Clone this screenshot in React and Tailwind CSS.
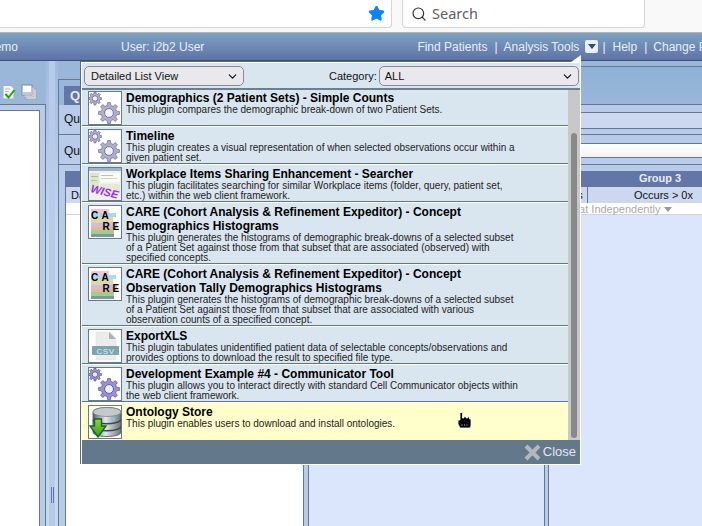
import { Search, Star, ChevronDown } from 'lucide-react';

const gearPoints = (cx, cy, r, teeth) => {
  const pts = [];
  const inner = r * 0.74;
  const step = (Math.PI * 2) / teeth;
  for (let i = 0; i < teeth; i++) {
    const a = i * step - Math.PI / 2;
    [[-0.3, inner], [-0.18, r], [0.18, r], [0.3, inner]].forEach(([o, rad]) => {
      const t = a + o * step;
      pts.push(`${(cx + Math.cos(t) * rad).toFixed(2)},${(cy + Math.sin(t) * rad).toFixed(2)}`);
    });
  }
  return pts.join(' ');
};

function Gear({ cx, cy, r, fill, edge }) {
  return (
    <g>
      <polygon points={gearPoints(cx, cy, r, 8)} fill={fill} stroke={edge} strokeWidth="0.7" />
      <circle cx={cx} cy={cy} r={r * 0.42} fill="#f2f2fa" stroke={edge} strokeWidth="0.9" />
    </g>
  );
}

function GearsIcon({ fill = '#aeaecd', edge = '#6c6c9a' }) {
  return (
    <svg width="32" height="32" viewBox="0 0 32 32">
      <Gear cx={6} cy={6.5} r={6.5} fill={fill} edge={edge} />
      <Gear cx={20} cy={21} r={10.5} fill={fill} edge={edge} />
    </svg>
  );
}

function WiseIcon() {
  return (
    <svg width="32" height="32" viewBox="0 0 32 32">
      <rect width="32" height="32" fill="#eef1ee" />
      <rect width="32" height="3" fill="#9fb4c8" />
      <rect x="1" y="5" width="9" height="18" fill="#dfe6c8" />
      <rect x="11" y="5" width="20" height="9" fill="#fbfbf0" />
      <rect x="12" y="7" width="12" height="1" fill="#b5c0cc" />
      <rect x="12" y="10" width="16" height="1" fill="#c8d0d8" />
      <rect x="2" y="8" width="7" height="1" fill="#a8b8a0" />
      <rect x="2" y="12" width="6" height="1" fill="#b8c4a8" />
      <rect x="11" y="16" width="20" height="8" fill="#e4e8d8" />
      <text x="1" y="24" transform="rotate(14 1 24)" fontFamily="Liberation Sans" fontSize="11" fontWeight="700" fontStyle="italic" fill="#9b30e6">WISE</text>
    </svg>
  );
}

function CareIcon() {
  const bars = [
    ['#f7c3d6', 3, 4, 18],
    ['#a6dcec', 7, 4, 25],
    ['#e3d6a2', 11, 6, 22],
    ['#cbbfe0', 17, 4, 26],
    ['#eeb48e', 21, 3, 25],
    ['#9ccf8c', 24, 4, 23],
    ['#7f98a8', 28, 3, 23],
  ];
  return (
    <svg width="32" height="32" viewBox="0 0 32 32">
      {bars.map(([c, y, h, w]) => (
        <rect key={y} x="2" y={y} width={w} height={h} fill={c} />
      ))}
      <text x="2" y="13" fontFamily="Liberation Sans" fontSize="10" fontWeight="700" fill="#000">C</text>
      <text x="12.5" y="13" fontFamily="Liberation Sans" fontSize="10" fontWeight="700" fill="#000">A</text>
      <text x="13.5" y="24" fontFamily="Liberation Sans" fontSize="10" fontWeight="700" fill="#000">R</text>
      <text x="23.5" y="24" fontFamily="Liberation Sans" fontSize="10" fontWeight="700" fill="#000">E</text>
    </svg>
  );
}

function CsvIcon() {
  return (
    <svg width="32" height="32" viewBox="0 0 32 32">
      <path d="M7 2 H21 L27 8 V30 H7 Z" fill="#ececec" stroke="#dcdcdc" strokeWidth="0.5" />
      <path d="M20 2 L27 9 H20 Z" fill="#b0b0b0" />
      <rect x="3" y="16" width="27" height="9" rx="1" fill="#7ea4ae" />
      <text x="16.5" y="23.5" textAnchor="middle" fontFamily="Liberation Sans" fontSize="8" letterSpacing="0.5" fill="#e8f0f2">CSV</text>
    </svg>
  );
}

function OntologyIcon() {
  return (
    <svg width="32" height="32" viewBox="0 0 32 32">
      <defs>
        <linearGradient id="dbBody" x1="0" x2="1" y1="0" y2="0">
          <stop offset="0" stopColor="#5d6468" />
          <stop offset="0.45" stopColor="#e6e9ea" />
          <stop offset="1" stopColor="#6d7478" />
        </linearGradient>
        <linearGradient id="dbArrow" x1="0" x2="0" y1="0" y2="1">
          <stop offset="0" stopColor="#a4d034" />
          <stop offset="1" stopColor="#2c9c20" />
        </linearGradient>
      </defs>
      <path d="M4 6 C4 0 32 0 32 6 V26 C32 32 4 32 4 26 Z" fill="url(#dbBody)" stroke="#4a5155" strokeWidth="0.8" />
      <ellipse cx="18" cy="6" rx="14" ry="4.5" fill="#c4cacc" stroke="#6a7175" strokeWidth="0.6" />
      <path d="M4 14 C8 19 28 19 32 14 M4 21 C8 26 28 26 32 21" fill="none" stroke="#3e4549" strokeWidth="1.4" />
      <ellipse cx="24" cy="13" rx="2.5" ry="1.8" fill="#7fc4e0" />
      <path d="M5.5 13 H12.5 V20 H17 L9 31 L1 20 H5.5 Z" fill="url(#dbArrow)" stroke="#0b6a2e" strokeWidth="1.4" />
    </svg>
  );
}

const plugins = [
  {
    title: ['Demographics (2 Patient Sets) - Simple Counts'],
    desc: ['This plugin compares the demographic break-down of two Patient Sets.'],
    icon: <GearsIcon />,
  },
  {
    title: ['Timeline'],
    desc: ['This plugin creates a visual representation of when selected observations occur within a', 'given patient set.'],
    icon: <GearsIcon />,
  },
  {
    title: ['Workplace Items Sharing Enhancement - Searcher'],
    desc: ['This plugin facilitates searching for similar Workplace items (folder, query, patient set,', 'etc.) within the web client framework.'],
    icon: <WiseIcon />,
  },
  {
    title: ['CARE (Cohort Analysis & Refinement Expeditor) - Concept', 'Demographics Histograms'],
    desc: [
      'This plugin generates the histograms of demographic break-downs of a selected subset',
      'of a Patient Set against those from that subset that are associated (observed) with',
      'specified concepts.',
    ],
    icon: <CareIcon />,
  },
  {
    title: ['CARE (Cohort Analysis & Refinement Expeditor) - Concept', 'Observation Tally Demographics Histograms'],
    desc: [
      'This plugin generates the histograms of demographic break-downs of a selected subset',
      'of a Patient Set against those from that subset that are associated with various',
      'observation counts of a specified concept.',
    ],
    icon: <CareIcon />,
  },
  {
    title: ['ExportXLS'],
    desc: ['This plugin tabulates unidentified patient data of selectable concepts/observations and', 'provides options to download the result to specified file type.'],
    icon: <CsvIcon />,
  },
  {
    title: ['Development Example #4 - Communicator Tool'],
    desc: ['This plugin allows you to interact directly with standard Cell Communicator objects within', 'the web client framework.'],
    icon: <GearsIcon fill="#9a90d6" edge="#5a4fa0" />,
  },
  {
    title: ['Ontology Store'],
    desc: ['This plugin enables users to download and install ontologies.'],
    icon: <OntologyIcon />,
    active: true,
  },
];

function PluginRow({ plugin }) {
  return (
    <div className={`flex gap-[4px] pl-[6px] pt-[2px] border-t border-t-white ${plugin.active ? 'bg-[#ffffcc] pb-[2px]' : 'border-b border-b-[#5f7689]'}`}>
      <div className="w-[34px] h-[34px] shrink-0 bg-white border border-[#667b8c] overflow-hidden">{plugin.icon}</div>
      <div className="min-w-0 whitespace-nowrap">
        {plugin.title.map((t) => (
          <div key={t} className="text-[12px] leading-[14px] font-bold text-black">{t}</div>
        ))}
        {plugin.desc.map((d) => (
          <div key={d} className="text-[10px] leading-[10px] text-[#222]">{d}</div>
        ))}
      </div>
    </div>
  );
}

function PluginPopup() {
  return (
    <div className="absolute left-[81px] top-[62px] w-[500px] h-[403px] border border-white shadow-[-1px_-1px_0_#5c6c7c] bg-[#dae6ef] flex flex-col z-10">
      {/* little arrow pointing at Analysis Tools */}
      <div className="absolute -top-[8px] right-[-1px] w-0 h-0 border-l-[10px] border-l-transparent border-b-[7px] border-b-white" />
      <div className="h-[27px] shrink-0 flex items-center pl-[2px] pt-[1px] border-b-2 border-[#6b7f90]">
        <button className="w-[160px] h-[20px] shrink-0 flex items-center justify-between pl-[6px] pr-[4px] rounded-[5px] border border-[#8a8a95] bg-[#e9e9ed] text-[11px] text-[#111]">
          Detailed List View
          <ChevronDown size={13} strokeWidth={2.2} />
        </button>
        <span className="ml-[85px] shrink-0 text-[11px] text-[#111]">Category:</span>
        <button className="ml-[2px] w-[200px] h-[20px] shrink-0 flex items-center justify-between pl-[5px] pr-[4px] rounded-[5px] border border-[#8a8a95] bg-[#e9e9ed] text-[11px] text-[#111]">
          ALL
          <ChevronDown size={13} strokeWidth={2.2} />
        </button>
      </div>
      <div className="flex-1 min-h-0 flex">
        <div className="w-[486px] overflow-hidden">
          <div className="-mt-[2px]">
            {plugins.map((p) => (
              <PluginRow key={p.title[0] + p.desc[0]} plugin={p} />
            ))}
          </div>
        </div>
        <div className="w-[12px] bg-[#c8c8c8] pt-[43px] pb-[2px] pl-[3px]">
          <div className="w-[6px] h-full bg-[#868a8a] rounded-full" />
        </div>
      </div>
      <div className="h-[24px] shrink-0 bg-[#64788c] flex items-center justify-end pr-[4px]">
        <svg width="17" height="17" viewBox="0 0 17 17" className="mr-[2px]">
          <path d="M2 2 L15 15 M15 2 L2 15" stroke="#b4b8bc" strokeWidth="4" />
        </svg>
        <span className="text-[13px] text-[#e2e8ec]">Close</span>
      </div>
    </div>
  );
}

function HandCursor() {
  return (
    <svg className="absolute left-[456px] top-[411px] z-20" width="17" height="19" viewBox="0 0 17 19">
      <path
        d="M4 1.5 H6.5 V7 H8 V5.5 H10 V7 H11.5 V6 H13.5 V8 H15 V15 L14 17 H4 L2 13 V9 H4 Z"
        fill="#000"
        stroke="#ffffff"
        strokeWidth="0.8"
      />
      <path d="M6 13 v2 M8.5 13 v2 M11 13 v2" stroke="#888" strokeWidth="0.8" />
    </svg>
  );
}

function GroupColumn({ name, body, first }) {
  return (
    <div className={`h-full shrink-0 border-x border-[#66778f] flex flex-col ${body} ${first ? 'w-[239px]' : 'w-[237px]'}`}>
      <div className="h-[15px] shrink-0 bg-[#6376a8] flex">
        <div className="w-[39px]" />
        <div className="w-[144px] text-center text-[11px] leading-[15px] font-bold text-[#e8ecf6]">{name}</div>
      </div>
      <div className="h-[17px] shrink-0 bg-[#ccd8ef] flex border-t border-[#66778f] text-[11px] leading-[16px] text-[#111]">
        <div className="w-[39px] pl-[5px] border-r border-[#66778f]">Dates</div>
        <div className="w-[144px] pl-[7px] text-center">Occurs &gt; 0x</div>
      </div>
      <div className="h-[12px] shrink-0 bg-white border-b border-[#d0d4da] flex items-center pl-[14px] pt-[2px] text-[11px] leading-[11px] text-[#aaaaaa] whitespace-nowrap">
        Treat Independently
        <span className="ml-[4px] w-0 h-0 border-x-[4px] border-x-transparent border-t-[5px] border-t-[#999]" />
      </div>
    </div>
  );
}

export default function App() {
  return (
    <div className="w-[702px] h-[526px] overflow-hidden relative flex flex-col bg-white text-[12px]" style={{ fontFamily: '"Liberation Sans", Arial, sans-serif' }}>
      {/* BROWSER TOOLBAR */}
      <div className="h-[33px] shrink-0 flex bg-[#f9f9fa] border-b border-[#b5b5b8] pb-[4px]">
        <div className="w-[392px] h-full bg-white border-r border-b border-[#d6d4d0] rounded-br-[4px] flex items-center justify-end pr-[6px]">
          <Star size={17} fill="#0a84ff" stroke="#0a84ff" className="mb-[1px]" />
        </div>
        <div className="ml-[10px] w-[243px] h-full bg-white border-x border-b border-[#d6d4d0] rounded-b-[4px] flex items-center pl-[8px] gap-[5px]">
          <Search size={16} stroke="#333" strokeWidth={1.8} />
          <span className="text-[14.5px] text-[#5e5e62]" style={{ fontFamily: '"Noto Sans", sans-serif' }}>Search</span>
        </div>
      </div>

      {/* APP HEADER */}
      <div className="h-[28px] shrink-0 flex items-center bg-gradient-to-b from-[#7da3c2] to-[#5f72a6] border-b border-[#3f5070] text-[#e8eef6] whitespace-nowrap">
        <div className="w-[18px] shrink-0 flex justify-end overflow-hidden">
          <span className="shrink-0">i2b2 Demo</span>
        </div>
        <span className="ml-[103px] shrink-0">User: i2b2 User</span>
        <span className="ml-[213px] shrink-0">Find Patients</span>
        <span className="ml-[7px] mr-[6px] shrink-0">|</span>
        <span className="shrink-0">Analysis Tools</span>
        <span className="ml-[6px] w-[13px] h-[13px] shrink-0 rounded-[2px] bg-[#e8f0fb] flex items-center justify-center">
          <span className="w-0 h-0 border-x-[4px] border-x-transparent border-t-[5px] border-t-[#2f4a7c]" />
        </span>
        <span className="mx-[4px] shrink-0">|</span>
        <span className="ml-[3px] shrink-0">Help</span>
        <span className="ml-[7px] mr-[6px] shrink-0">|</span>
        <span className="shrink-0">Change Password</span>
      </div>

      {/* MAIN */}
      <div className="flex-1 min-h-0 flex bg-[#9ab6d9]">
        {/* LEFT PANEL */}
        <div className="w-[46px] shrink-0 flex flex-col">
          <div className="h-[43px] shrink-0 flex items-end justify-end gap-[5px] pb-[4px] pr-[9px]">
            <svg width="14" height="15" viewBox="0 0 14 15">
              <path d="M1 0.5 H9 L12 3.5 V14 H1 Z" fill="#f4f4ee" stroke="#a8aeb4" />
              <path d="M3 4 H8 M3 6.5 H7" stroke="#b8bec4" />
              <path d="M3.5 9 L6.5 12.5 L12.5 5" fill="none" stroke="#1f9f1f" strokeWidth="2" />
            </svg>
            <svg width="16" height="16" viewBox="0 0 16 16">
              <rect x="5" y="5" width="10" height="10" fill="#f4f6fa" stroke="#a0a8b4" />
              <rect x="3" y="3" width="10" height="10" fill="#eef1f6" stroke="#a0a8b4" />
              <rect x="1" y="1" width="10" height="10" fill="#ffffff" stroke="#7c8798" />
              <rect x="1" y="8" width="10" height="3" fill="#b8c6de" />
            </svg>
          </div>
          <div className="flex-1 min-h-0 bg-[#b9cbea] border-t border-r border-[#66778f] pt-[5px] pr-[5px]">
            <div className="h-full bg-white border-t border-r border-[#66778f]" />
          </div>
        </div>

        {/* SPLITTER */}
        <div className="w-[12px] shrink-0 flex bg-gradient-to-b from-[#a0bbdd] to-[#c6dde9] to-40%">
          <div className="ml-[3px] w-[6px] h-full bg-[#b8cbec] flex items-end justify-center pb-[23px] gap-[1px]">
            <span className="w-[1px] h-[16px] bg-[#5f78ac]" />
            <span className="w-[1px] h-[16px] bg-[#5f78ac]" />
          </div>
        </div>

        {/* QUERY TOOL */}
        <div className="flex-1 min-w-0 flex flex-col">
          <div className="h-[44px] shrink-0 flex">
            <div className="w-[240px] shrink-0 mt-[18px] border-t border-l border-[#66778f] pt-[6px] pl-[5px]">
              <div className="h-[20px] bg-[#6376a8] pl-[6px] font-bold text-[13px] leading-[20px] text-[#e8ecf6]">Query Tool</div>
            </div>
            <div className="flex-1 mt-[5px] border-t border-b border-[#66778f] bg-gradient-to-b from-[#8eb1d7] to-[#9ab6d9]" />
          </div>

          <div className="flex-1 min-h-0 flex flex-col bg-[#b9cbea] border-l border-[#66778f]">
            <div className="h-[30px] shrink-0 flex border-b border-[#66778f]">
              <div className="w-[240px] pl-[5px] pt-[7px] text-[12px] leading-[14px] text-[#111]">Query Name:</div>
              <div className="flex-1 pt-[7px]">
                <div className="h-[17px] bg-[#ccd8ef] border-y border-[#66778f]" />
              </div>
            </div>
            <div className="h-[30px] shrink-0 flex border-b border-[#66778f]">
              <div className="w-[240px] pl-[5px] pt-[9px] text-[12px] leading-[14px] text-[#111]">Query Timing:</div>
              <div className="flex-1 pt-[8px]">
                <div className="h-[15px] bg-gradient-to-b from-white to-[#f2f2f2] border-y border-[#66778f]" />
              </div>
            </div>
            <div className="flex-1 min-h-0 flex pt-[6px] pl-[6px]">
              <GroupColumn name="Group 1" body="bg-white" first />
              <div className="w-[4px] shrink-0" />
              <GroupColumn name="Group 2" body="bg-[#dbe6fd]" />
              <div className="w-[3px] shrink-0" />
              <GroupColumn name="Group 3" body="bg-[#dbe6fd]" />
            </div>
          </div>
        </div>
      </div>

      <PluginPopup />
      <HandCursor />
    </div>
  );
}
